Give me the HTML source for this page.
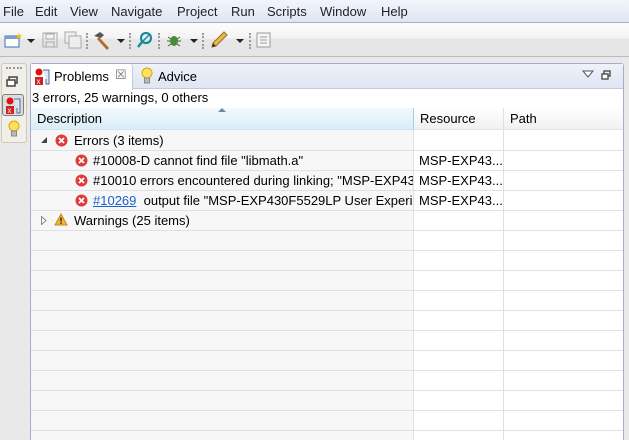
<!DOCTYPE html>
<html><head><meta charset="utf-8"><style>
*{margin:0;padding:0;box-sizing:border-box}
body{width:629px;height:440px;overflow:hidden;background:#e9e9e9;font-family:"Liberation Sans",sans-serif;font-size:13px;color:#000;position:relative}
.abs{position:absolute}
#menu{left:0;top:0;width:629px;height:23px;background:linear-gradient(#f2f5fb,#dfe6f4);border-bottom:1px solid #a9b0bd}
#menu span{position:absolute;top:4px;font-size:13px;color:#222}
#tb{left:0;top:23px;width:629px;height:34px;background:linear-gradient(#fdfdfd,#f3f3f3 45%,#e6e6e6 50%,#e6e6e6);border-bottom:1px solid #bcbcbc}
.sep{position:absolute;top:10px;width:2px;height:16px;border-left:2px dotted #999}
.dd{position:absolute;top:16px;width:0;height:0;border-left:4px solid transparent;border-right:4px solid transparent;border-top:4px solid #222}
#left{left:0;top:63px;width:27px;height:377px;background:#e9e9e9}
#lbox{left:1px;top:63px;width:26px;height:80px;background:#f0efe8;border:1px solid #cfcbb8;border-radius:3px}
#panel{left:30px;top:63px;width:594px;height:377px;background:#fff;border:1px solid #a7acc8;border-bottom:none;border-radius:3px 3px 0 0}
#tabs{left:31px;top:64px;width:592px;height:25px;background:linear-gradient(#eef2f9,#dfe5f2);border-bottom:1px solid #c3c9d9}
#tab1{left:31px;top:64px;width:102px;height:26px;background:#fff;border-right:1px solid #c3c9d9;border-radius:3px 3px 0 0}
</style></head><body>
<div id="menu" class="abs">
<span style="left:3px">File</span><span style="left:35px">Edit</span><span style="left:70px">View</span><span style="left:111px">Navigate</span><span style="left:177px">Project</span><span style="left:231px">Run</span><span style="left:267px">Scripts</span><span style="left:320px">Window</span><span style="left:381px">Help</span>
</div>
<div id="tb" class="abs">
<svg class="abs" style="left:4px;top:8px" width="20" height="18"><rect x="1" y="5" width="14" height="11" fill="#fff" stroke="#3a6fb0"/><rect x="1" y="5" width="14" height="3" fill="#7aa0d0"/><path d="M15 2l1 2 2 0-1.5 1.5.5 2-2-1-2 1 .5-2L12 4h2z" fill="#f5c400"/></svg>
<div class="dd" style="left:27px"></div>
<svg class="abs" style="left:42px;top:9px" width="16" height="16"><rect x="1" y="1" width="14" height="14" fill="none" stroke="#aaa"/><rect x="4" y="2" width="8" height="5" fill="none" stroke="#aaa"/><rect x="4" y="10" width="8" height="5" fill="none" stroke="#aaa"/></svg>
<svg class="abs" style="left:64px;top:8px" width="18" height="18"><rect x="1" y="1" width="11" height="11" fill="#eee" stroke="#aaa"/><rect x="5" y="5" width="12" height="12" fill="#eee" stroke="#aaa"/></svg>
<div class="sep" style="left:86px"></div>
<svg class="abs" style="left:92px;top:8px" width="20" height="20"><path d="M2 5l6-4 4 3-3 3z" fill="#555"/><path d="M7 6l10 11-2 2L5 8z" fill="#b06a2a"/></svg>
<div class="dd" style="left:117px"></div>
<div class="sep" style="left:129px"></div>
<svg class="abs" style="left:136px;top:8px" width="18" height="18"><circle cx="10" cy="7" r="5" fill="none" stroke="#1a8a9e" stroke-width="2.2"/><path d="M6 11l-4 5" stroke="#1a8a9e" stroke-width="2.5"/><path d="M7 10l6-6" stroke="#1a8a9e" stroke-width="1.5"/></svg>
<div class="sep" style="left:158px"></div>
<svg class="abs" style="left:166px;top:9px" width="16" height="16"><ellipse cx="8" cy="9" rx="4" ry="5" fill="#4a8a3a"/><path d="M2 5l3 2M14 5l-3 2M1 9h3M12 9h3M2 14l3-2M14 14l-3-2" stroke="#3a6a2a"/></svg>
<div class="dd" style="left:190px"></div>
<div class="sep" style="left:202px"></div>
<svg class="abs" style="left:209px;top:8px" width="20" height="18"><path d="M3 16l4-1 11-11-3-3L4 12z" fill="#e8b84a" stroke="#9a7020"/><path d="M3 16l1-4 3 3z" fill="#333"/></svg>
<div class="dd" style="left:236px"></div>
<div class="sep" style="left:249px"></div>
<svg class="abs" style="left:256px;top:9px" width="16" height="16"><rect x="1" y="1" width="13" height="14" fill="#f5f5f5" stroke="#999"/><path d="M4 5h7M4 8h7M4 11h7" stroke="#999"/></svg>
</div>
<div id="left" class="abs"></div>
<div id="lbox" class="abs">
<div class="abs" style="left:4px;top:3px;width:16px;border-top:2px dotted #999"></div>
<svg class="abs" style="left:4px;top:12px" width="12" height="12"><rect x="3" y="1" width="8" height="6" fill="none" stroke="#444" stroke-width="1.5"/><rect x="1" y="4" width="8" height="6" fill="#fff" stroke="#444" stroke-width="1.5"/></svg>
<div class="abs" style="left:0px;top:30px;width:22px;height:22px;border:1px solid #7f7f7f;border-radius:3px;background:#ddd"></div>
<svg class="abs" style="left:3px;top:33px" width="18" height="18"><circle cx="5" cy="4" r="3.5" fill="#e01010"/><rect x="1" y="9" width="8" height="8" fill="#d02020"/><text x="2.5" y="16" font-size="8" fill="#fff" font-family="Liberation Sans">x</text><path d="M9 2h6v14h-3v-5" fill="#dde6f5" stroke="#4a6a9a"/></svg>
<svg class="abs" style="left:5px;top:56px" width="14" height="18"><circle cx="7" cy="6" r="5" fill="#ffe060" stroke="#d8a800"/><rect x="4.5" y="11" width="5" height="5" fill="#bbb" stroke="#888"/></svg>
</div>
<div id="panel" class="abs"></div>
<div id="tabs" class="abs"></div>
<div id="tab1" class="abs"></div>
<svg class="abs" style="left:34px;top:68px" width="18" height="18"><circle cx="5" cy="4" r="3.5" fill="#e01010"/><rect x="1" y="9" width="8" height="8" fill="#d02020"/><text x="2.5" y="16" font-size="8" fill="#fff" font-family="Liberation Sans">x</text><path d="M9 2h6v14h-3v-5" fill="#dde6f5" stroke="#4a6a9a"/></svg>
<div class="abs" style="left:54px;top:69px;font-size:13px">Problems</div>
<div class="abs" style="left:115px;top:67px;font-size:13px;color:#777">&#x2612;</div>
<svg class="abs" style="left:140px;top:67px" width="14" height="18"><circle cx="7" cy="6" r="5" fill="#ffe060" stroke="#d8a800"/><rect x="4.5" y="11" width="5" height="5" fill="#bbb" stroke="#888"/></svg>
<div class="abs" style="left:158px;top:69px;font-size:13px">Advice</div>
<svg class="abs" style="left:582px;top:70px" width="12" height="8"><path d="M1 1h10L6 7z" fill="#fff" stroke="#555"/></svg>
<svg class="abs" style="left:601px;top:70px" width="10" height="10"><rect x="3" y="1" width="6" height="5" fill="none" stroke="#444" stroke-width="1.3"/><rect x="1" y="4" width="6" height="5" fill="#fff" stroke="#444" stroke-width="1.3"/></svg>
<div class="abs" style="left:32px;top:90px">3 errors, 25 warnings, 0 others</div>
<div class="abs" style="left:31px;top:108px;width:383px;height:22px;background:linear-gradient(#f4f9fd,#d9edf8);border-right:1px solid #a6cbe3;border-bottom:1px solid #cfe3ef"></div>
<div class="abs" style="left:414px;top:108px;width:209px;height:22px;background:linear-gradient(#fff,#f1f1f1);border-bottom:1px solid #e4e4e4"></div>
<div class="abs" style="left:503px;top:108px;width:1px;height:22px;background:#e0e0e0"></div>
<svg class="abs" style="left:218px;top:108px" width="8" height="4"><path d="M0 4L4 0 8 4z" fill="#6a8aa8"/></svg>
<div class="abs" style="left:37px;top:111px">Description</div>
<div class="abs" style="left:420px;top:111px">Resource</div>
<div class="abs" style="left:510px;top:111px">Path</div>
<div class="abs" style="left:31px;top:130px;width:383px;height:310px;background:#f7f7f7"></div>
<div class="abs" style="left:413px;top:130px;width:1px;height:310px;background:#e0e0e0"></div>
<div class="abs" style="left:503px;top:130px;width:1px;height:310px;background:#e0e0e0"></div>
<div class="abs" style="left:31px;top:131px;width:592px;height:309px;background:repeating-linear-gradient(transparent 0,transparent 19px,#e0e0e0 19px,#e0e0e0 20px)"></div>
<svg class="abs" style="left:41px;top:137px" width="7" height="7"><path d="M6 0v6H0z" fill="#444"/></svg>
<svg class="abs" style="left:55px;top:134px" width="13" height="13"><circle cx="6.5" cy="6.5" r="6" fill="#e03a3a"/><path d="M4 4l5 5M9 4l-5 5" stroke="#fff" stroke-width="1.8"/></svg>
<div class="abs" style="left:74px;top:133px">Errors (3 items)</div>
<svg class="abs" style="left:75px;top:154px" width="13" height="13"><circle cx="6.5" cy="6.5" r="6" fill="#e03a3a"/><path d="M4 4l5 5M9 4l-5 5" stroke="#fff" stroke-width="1.8"/></svg>
<div class="abs" style="left:93px;top:153px">#10008-D cannot find file "libmath.a"</div>
<svg class="abs" style="left:75px;top:174px" width="13" height="13"><circle cx="6.5" cy="6.5" r="6" fill="#e03a3a"/><path d="M4 4l5 5M9 4l-5 5" stroke="#fff" stroke-width="1.8"/></svg>
<div class="abs" style="left:93px;top:173px;width:320px;overflow:hidden;white-space:nowrap">#10010 errors encountered during linking; "MSP-EXP430F5529LP</div>
<svg class="abs" style="left:75px;top:194px" width="13" height="13"><circle cx="6.5" cy="6.5" r="6" fill="#e03a3a"/><path d="M4 4l5 5M9 4l-5 5" stroke="#fff" stroke-width="1.8"/></svg>
<div class="abs" style="left:93px;top:193px;width:320px;overflow:hidden;white-space:nowrap"><span style="color:#1a5fd0;text-decoration:underline">#10269</span>&nbsp; output file "MSP-EXP430F5529LP User Experience</div>
<svg class="abs" style="left:41px;top:216px" width="6" height="9"><path d="M.5 .5L5 4.5 .5 8.5z" fill="#fff" stroke="#888"/></svg>
<svg class="abs" style="left:54px;top:213px" width="14" height="13"><path d="M7 1L13 12H1z" fill="#f3b43a" stroke="#c88a10"/><rect x="6.3" y="4.5" width="1.4" height="4" fill="#222"/><rect x="6.3" y="9.5" width="1.4" height="1.4" fill="#222"/></svg>
<div class="abs" style="left:74px;top:213px">Warnings (25 items)</div>
<div class="abs" style="left:419px;top:153px;width:84px;overflow:hidden;white-space:nowrap">MSP-EXP43...</div>
<div class="abs" style="left:419px;top:173px;width:84px;overflow:hidden;white-space:nowrap">MSP-EXP43...</div>
<div class="abs" style="left:419px;top:193px;width:84px;overflow:hidden;white-space:nowrap">MSP-EXP43...</div>
</body></html>
